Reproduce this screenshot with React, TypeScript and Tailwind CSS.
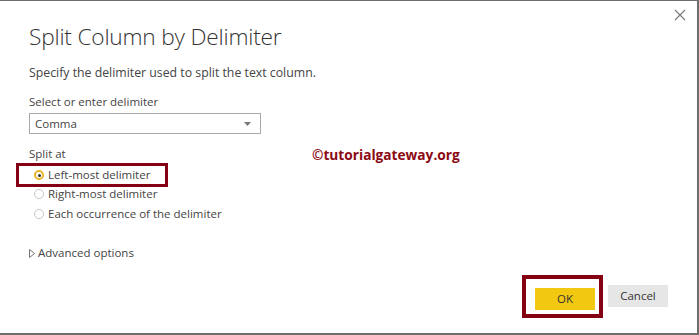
import { useState } from "react";

const font = { fontFamily: '"Open Sans", "Noto Sans", sans-serif' };

const Radio = ({ checked }: { checked: boolean }) => (
  <span
    className={
      checked
        ? "flex h-[10px] w-[10px] items-center justify-center rounded-full border-2 border-[#eab52a] bg-white"
        : "flex h-[10px] w-[10px] items-center justify-center rounded-full border border-[#c6c6c6] bg-white"
    }
  >
    {checked && <span className="h-[3px] w-[3px] rounded-full bg-[#333]" />}
  </span>
);

export default function App() {
  const [choice, setChoice] = useState("left");

  return (
    <div
      className="relative h-[335px] w-[699px] overflow-hidden border-t border-r-2 border-b-2 border-[#6e6e6e] bg-white text-[#444]"
      style={font}
    >
      <button className="absolute right-[11px] top-[8px] flex h-[12px] w-[12px] items-center justify-center">
        <svg width="12" height="12" viewBox="0 0 12 12">
          <path d="M1 1 L11 11 M11 1 L1 11" stroke="#777" strokeWidth="1.1" />
        </svg>
      </button>

      <div className="absolute left-[312px] top-[145px] text-[13.7px] font-bold leading-[18px] text-[#8b0a14]">
        ©tutorialgateway.org
      </div>

      <div className="pl-[29px] pt-[20px]">
        <h1 className="text-[22.7px] font-light leading-[32px] tracking-[-0.2px] text-[#333]">
          Split Column by Delimiter
        </h1>
        <p className="mt-[10px] text-[12.3px] leading-[20px]">
          Specify the delimiter used to split the text column.
        </p>
        <div className="mt-[10px] text-[11.5px] leading-[18px]">Select or enter delimiter</div>
        <div className="mt-[2px] flex h-[21px] w-[232px] items-center justify-between border border-[#a9a9a9] pl-[5px] pr-[9px] text-[11.5px]">
          <span>Comma</span>
          <svg width="7" height="4" viewBox="0 0 7 4">
            <path d="M0 0 H7 L3.5 4 Z" fill="#777" />
          </svg>
        </div>

        <div className="mt-[11px] text-[11.5px] leading-[18px]">Split at</div>
        <div className="-ml-[13px] flex h-[24px] w-[152px] items-center gap-[4px] border-[3px] border-[#860014] pl-[15px] text-[11.5px]">
          <button className="flex items-center gap-[4px]" onClick={() => setChoice("left")}>
            <Radio checked={choice === "left"} />
            <span>Left-most delimiter</span>
          </button>
        </div>
        <button
          className="-mt-[2px] flex h-[18px] items-center gap-[4px] pl-[5px] text-[11.5px]"
          onClick={() => setChoice("right")}
        >
          <Radio checked={choice === "right"} />
          <span>Right-most delimiter</span>
        </button>
        <button
          className="mt-[2px] flex h-[18px] items-center gap-[4px] pl-[5px] text-[11.5px]"
          onClick={() => setChoice("each")}
        >
          <Radio checked={choice === "each"} />
          <span>Each occurrence of the delimiter</span>
        </button>

        <div className="mt-[21px] flex h-[18px] items-center gap-[3px] text-[11.5px]">
          <svg width="6" height="9" viewBox="0 0 6 9">
            <path d="M0.5 0.5 L5.5 4.5 L0.5 8.5 Z" fill="none" stroke="#777" strokeWidth="1" />
          </svg>
          <span>Advanced options</span>
        </div>
      </div>

      <div className="mt-[13px] flex items-start justify-end pr-[29px]">
        <div className="border-4 border-[#860014] pb-[4px] pl-[9px] pr-[4px] pt-[6px]">
          <button className="h-[22px] w-[60px] bg-[#f2c811] text-[11.5px] text-[#333]">OK</button>
        </div>
        <button className="ml-[5px] mt-[10px] h-[22px] w-[60px] bg-[#e6e6e6] text-[11.5px] text-[#333]">
          Cancel
        </button>
      </div>
    </div>
  );
}
